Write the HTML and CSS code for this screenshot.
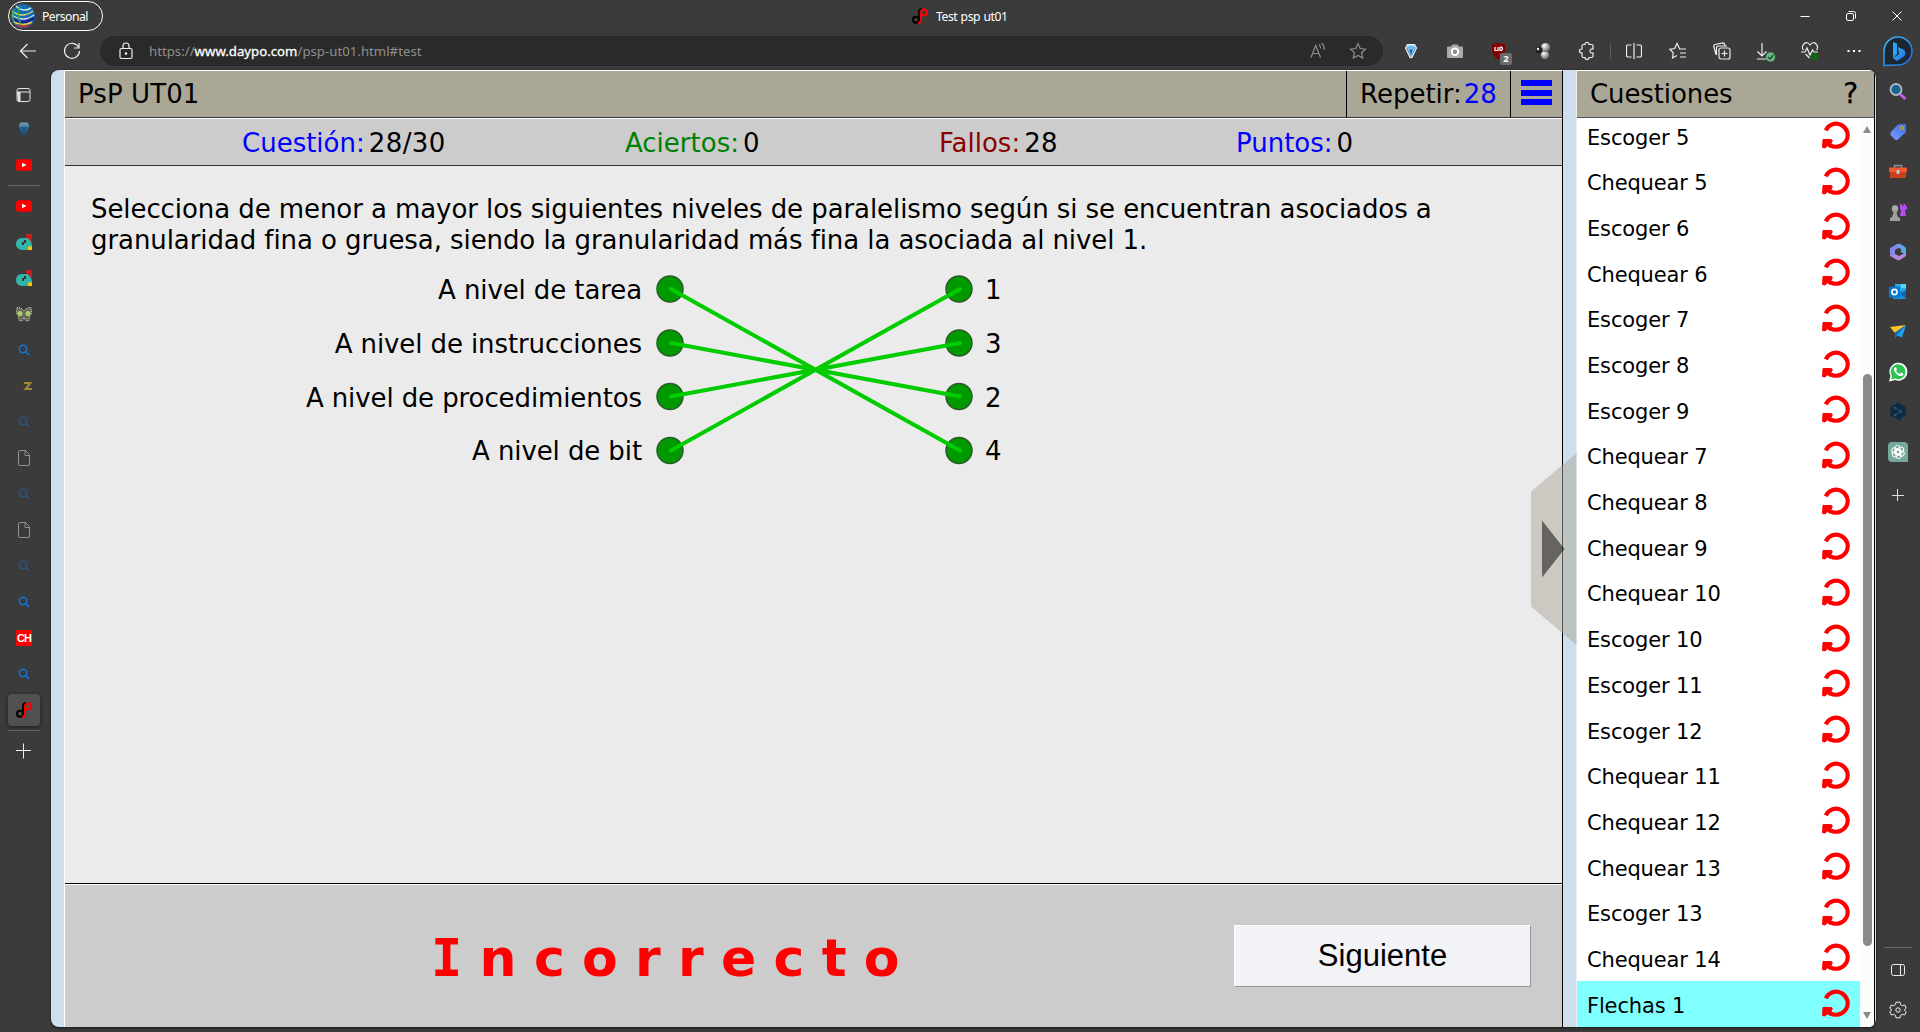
FILE: index.html
```html
<!DOCTYPE html>
<html lang="es">
<head>
<meta charset="utf-8">
<title>Test psp ut01</title>
<link rel="stylesheet" href="styles.css">
</head>
<body>
<svg class="defs" width="0" height="0">
  <defs>
    <linearGradient id="gBlue" x1="0" y1="0" x2="1" y2="1"><stop offset="0" stop-color="#35c1f1"/><stop offset="1" stop-color="#2764e7"/></linearGradient>
    <linearGradient id="gGem" x1="0" y1="0" x2="0" y2="1"><stop offset="0" stop-color="#b9e6fa"/><stop offset=".4" stop-color="#2095e2"/><stop offset="1" stop-color="#0359a8"/></linearGradient>
    <linearGradient id="gTag" x1="0" y1="1" x2="1" y2="0"><stop offset="0" stop-color="#7b9cff"/><stop offset="1" stop-color="#3f6fe0"/></linearGradient>
    <linearGradient id="gM1" x1="0" y1="0" x2="1" y2="0"><stop offset="0" stop-color="#8489e8"/><stop offset="1" stop-color="#3fb8f0"/></linearGradient>
    <radialGradient id="gBall" cx=".35" cy=".3" r=".8"><stop offset="0" stop-color="#fff"/><stop offset="1" stop-color="#555"/></radialGradient>
  </defs>
  <symbol id="redo" viewBox="0 0 28 28"><path d="M3.800 9.300A11.500 11.500 0 1 1 8 23.900" fill="none" stroke="#f00" stroke-width="4.200"/><path d="M1 18.400L9.200 18.600Q11 19 9.800 21L8.600 22.600L10.400 24.200L8 26.400L5.400 24.800L3 27L0.600 26.600Z" fill="#f00" stroke="#f00" stroke-linejoin="round"/></symbol>
  <symbol id="daypo" viewBox="0 0 16 16"><circle cx="4" cy="11.7" r="3" fill="none" stroke="#000" stroke-width="2"/><path d="M7 12V4.5Q7 1 10 1" fill="none" stroke="#000" stroke-width="2"/><circle cx="12" cy="4.6" r="3" fill="none" stroke="#f00" stroke-width="2"/><path d="M9 4.5V11.5Q9 15 6 15" fill="none" stroke="#f00" stroke-width="2"/></symbol>
  <symbol id="gem" viewBox="0 0 16 16"><path d="M4.500 1.500h7L13.500 5 9 14.500H7L2.500 5Z" fill="url(#gGem)"/><path d="M5.500 6h5L8 14.500Z" fill="#004a8f" opacity=".6"/></symbol>
  <symbol id="youtube" viewBox="0 0 16 16"><rect y="2.3" width="16" height="11.5" rx="3" fill="#f00"/><path d="M6 5.7v4.6l4.5-2.3Z" fill="#fff"/></symbol>
  <symbol id="cloud" viewBox="0 0 16 16"><path d="M10 0h6v12h-6Z" fill="#c71e1d"/><path d="M11 11h5v5h-5Z" fill="#ffc20e"/><path d="M6 4h5q4 1 5 8.500H12V16H6C2 15.500 0 13 0 10s2-6 6-6Z" fill="#31b5a8"/><path d="M6 8h2V6h2v3H8v2H6Z" fill="#3b3333"/></symbol>
  <symbol id="butterfly" viewBox="0 0 16 16"><path d="M1 1.500 5 2l3 3 3-3 4-.5.7 5.500-2 3-.7 4.500-3 .5-2-3.500-2 3.500-3-.5-.7-4.500-2-3Z" fill="#6c6a5c" stroke="#d8d8ca" stroke-dasharray="1 1"/><circle cx="4" cy="7.500" r="2.500" fill="#a9cf67"/><circle cx="12" cy="7.500" r="2.500" fill="#a9cf67"/></symbol>
  <symbol id="search" viewBox="0 0 16 16"><circle cx="7" cy="7" r="3.700" fill="none" stroke="#1574cf" stroke-width="1.500"/><path d="m9.700 9.700 3.500 3.300" stroke="#1574cf" stroke-width="1.700"/></symbol>
  <symbol id="file" viewBox="0 0 16 16"><path d="M3.500.5h6l4 4v9.500q0 1.500-1.500 1.500H3.500q-1 0-1-1V1.500q0-1 1-1Zm5.500 0v5h4.500" fill="none" stroke="#929292"/></symbol>
  <symbol id="plus" viewBox="0 0 16 16"><path d="M7.500.5v15M0 7.500h15" stroke="#eee"/></symbol>
</svg>

<div class="window">
  <header class="titlebar">
    <div class="profile">
      <svg width="24" height="24" viewBox="0 0 24 24"><circle cx="12" cy="12" r="12" fill="#176bb0"/><path d="M5 2q7 7 15 2" stroke="#b7ece0" stroke-width="1.500" fill="none"/><path d="M1 7q10 8 21 0" stroke="#ded66b" stroke-width="1.500" fill="none"/><path d="M1 11q11 8 22 0" stroke="#d8d4f7" stroke-width="1.500" fill="none"/><path d="M1 15q11 7 22-1" stroke="#17249e" stroke-width="3" fill="none"/><path d="M3 18q9 5 18 0" stroke="#e6cf3a" stroke-width="1.500" fill="none"/><path d="M6 21q7 3 12 0" stroke="#c92b38" stroke-width="2" fill="none"/><path d="M3 5q-3 6 0 13M9 2q-4 8 1 19" stroke="#32b24b" stroke-width="1.500" fill="none"/></svg>
      <span>Personal</span>
    </div>
    <div class="tab-title"><svg width="16" height="16"><use href="#daypo"/></svg><span>Test psp ut01</span></div>
    <div class="controls">
      <svg width="12" height="12" viewBox="0 0 12 12"><path d="M1.500 6.500h9"/></svg>
      <svg width="12" height="12" viewBox="0 0 12 12"><rect x="1.500" y="3.500" width="7" height="7" rx="1.500"/><path d="M3.500 1.500h5q2 0 2 2v5"/></svg>
      <svg width="12" height="12" viewBox="0 0 12 12"><path d="m1.500 1.500 9 9m0-9-9 9"/></svg>
    </div>
  </header>

  <nav class="toolbar">
    <div class="nav-btn"><svg width="18" height="18" viewBox="0 0 18 18"><path d="M17 9H1.500M8.500 2 1.500 9l7 7"/></svg></div>
    <div class="nav-btn"><svg width="18" height="18" viewBox="0 0 18 18"><path d="M15.500 5A7.500 7.500 0 1 0 16.500 9M16 1v5h-5"/></svg></div>
    <div class="address">
      <svg class="lock" width="14" height="18" viewBox="0 0 14 18"><rect x="1" y="6.500" width="12" height="10" rx="1.500"/><path d="M4 6.500V4q0-3 3-3t3 3v2.500"/><circle cx="7" cy="11.500" r=".7" fill="#fff"/></svg>
      <span class="url">https://<b>www.daypo.com</b>/psp-ut01.html#test</span>
      <svg class="dim" width="18" height="18" viewBox="0 0 18 18"><path d="m2 15.500 4.700-12L11.500 15.500M3.500 11.500h6.500M10 2.500q2 2 1.500 4M12.500 1q3.500 3 2.300 7"/></svg>
      <svg class="dim star" width="18" height="18" viewBox="0 0 18 18"><path d="m9 1.500 2.200 5 5.300.6-4 3.600 1.200 5.300L9 13.500 4.300 16l1.200-5.300-4-3.600 5.300-.6Z"/></svg>
    </div>
    <div class="tools">
      <span><svg width="16" height="16"><use href="#gem"/></svg></span>
      <span><svg width="16" height="16" viewBox="0 0 16 16"><path d="M1 3.500h3l1.500-2h5l1.500 2h3q1 0 1 1V14q0 1-1 1H1q-1 0-1-1V4.500q0-1 1-1Z" fill="#aaa" stroke="none"/><circle cx="8" cy="8.800" r="3.200" fill="#888" stroke="#fff" stroke-width="2"/></svg></span>
      <span class="shield"><svg width="16" height="18" viewBox="0 0 16 18"><path d="M1 2q4 0 6-1.500Q10 2 14 2v6q0 6-6.500 9.500Q1 14 1 8Z" fill="#800000" stroke="none"/><path d="M4 5v3.500h3V5m2 0v3.500h1.500q2-1.700 0-3.500H9" stroke="#fff"/></svg><i>2</i></span>
      <span><svg width="16" height="18" viewBox="0 0 16 18" stroke="none"><g stroke="none"><circle cx="10" cy="13" r="4.200" fill="url(#gBall)"/><circle cx="10.500" cy="5.500" r="4.500" fill="url(#gBall)"/><circle cx="4" cy="8" r="3.500" fill="#222"/><circle cx="3" cy="7" r="1.200" fill="#eee"/></g></svg></span>
      <span><svg width="18" height="18" viewBox="0 0 18 18"><path d="M4 4q0-1.500 1.500-1.500H7q0-2 2-2t2 2h2.500Q15 2.500 15 4v3q-3-.3-3 2t3 2v3q0 1.500-1.500 1.500H11q0 2-2 2t-2-2H5.500Q4 15.500 4 14v-3q-2.500 0-2.500-2T4 7Z"/></svg></span>
      <em></em>
      <span><svg width="16" height="18" viewBox="0 0 16 18"><path d="M8 1v16M5.500 3H2q-1.500 0-1.500 1.500v9Q.5 15 2 15h3.500m5-12H14q1.500 0 1.500 1.500v9q0 1.500-1.500 1.500h-3.500"/></svg></span>
      <span><svg width="18" height="18" viewBox="0 0 18 18"><path d="M10.500 6.500 8 1.500 5.700 6.500.8 7.300l3.500 3.500L3.500 16 8 13.500M10 7h7m-6 4h6m-6 4h6"/></svg></span>
      <span><svg width="18" height="18" viewBox="0 0 18 18"><rect x="6" y="6" width="11" height="11" rx="2"/><path d="M11.500 8.500v6m-3-3h6M3 12.500.8 4.500Q.5 3 2 2.500L10 .8q1.500 0 2 3M3.500 13V6q0-2 2-2H14"/></svg></span>
      <span><svg width="22" height="22" viewBox="0 0 22 22"><path d="M7 3v13M2.500 11.500 7 16l4.500-4.500M2 19h9"/><circle cx="15.500" cy="17" r="4.700" fill="#6bb585" stroke="none"/><path d="m13 17 2 2 3.500-4" stroke="#174d2a"/></svg></span>
      <span><svg width="20" height="20" viewBox="0 0 20 20"><path d="M3.500 9Q1 6 4 3t6 1q3-4 6-1t.5 6M5.500 13l4 4m-8.500-6h4l2-4 3 7 2.500-5 1.500 2h4"/><circle cx="14.500" cy="15.500" r="3.500" fill="#0b6a0b" stroke="none"/></svg></span>
      <span><svg width="16" height="4" viewBox="0 0 16 4"><path d="M1.500 1h2v2h-2Zm5.500 0h2v2H7Zm5.500 0h2v2h-2Z" fill="#fff" stroke="none"/></svg></span>
    </div>
    <svg class="bing" width="32" height="32" viewBox="0 0 32 32"><path d="M2 30.500V16A14 14 0 1 1 16 30Z" fill="#1d2633" stroke="url(#gBlue)" stroke-width="1.500"/><path d="m11 7 4 1.500V19l-4 4Z" fill="#29a8ef"/><path d="m16 12 6 3q3 3 0 6.500L15 26l-4-3 6-3.700Z" fill="url(#gBlue)"/></svg>
  </nav>

  <div class="workspace">
    <aside class="tabs">
      <div class="tab first"><svg width="16" height="16" viewBox="0 0 16 16"><rect x="1" y="1.500" width="13" height="13" rx="2" fill="none" stroke="#e3e3e3"/><path d="M1 5h13" stroke="#e3e3e3"/><path d="M1 5h3.500v9.500H2Z" fill="#e3e3e3"/></svg></div>
      <div class="tab faded"><svg width="16" height="16"><use href="#gem"/></svg></div>
      <div class="tab"><svg width="16" height="16"><use href="#youtube"/></svg></div>
      <div class="rule"></div>
      <div class="tab"><svg width="16" height="16"><use href="#youtube"/></svg></div>
      <div class="tab"><svg width="16" height="16"><use href="#cloud"/></svg></div>
      <div class="tab"><svg width="16" height="16"><use href="#cloud"/></svg></div>
      <div class="tab"><svg width="16" height="16"><use href="#butterfly"/></svg></div>
      <div class="tab"><svg width="16" height="16"><use href="#search"/></svg></div>
      <div class="tab"><svg width="16" height="16" viewBox="0 0 16 16"><path d="M1 12V5l3 4 3-4v7" fill="none" stroke="#484236"/><path d="M8 5h6.500L9.500 11H16" fill="none" stroke="#a58a35" stroke-width="2"/></svg></div>
      <div class="tab sleeping"><svg width="16" height="16"><use href="#search"/></svg></div>
      <div class="tab"><svg width="16" height="16"><use href="#file"/></svg></div>
      <div class="tab sleeping"><svg width="16" height="16"><use href="#search"/></svg></div>
      <div class="tab"><svg width="16" height="16"><use href="#file"/></svg></div>
      <div class="tab sleeping"><svg width="16" height="16"><use href="#search"/></svg></div>
      <div class="tab"><svg width="16" height="16"><use href="#search"/></svg></div>
      <div class="tab"><span class="ch">CH</span></div>
      <div class="tab"><svg width="16" height="16"><use href="#search"/></svg></div>
      <div class="tab"><div class="active"><svg width="16" height="16"><use href="#daypo"/></svg></div></div>
      <div class="rule"></div>
      <div class="tab"><svg width="16" height="16"><use href="#plus"/></svg></div>
    </aside>

    <main class="page">
      <section class="quiz">
        <div class="quiz-head">
          <h1>PsP UT01</h1>
          <div class="repeat">Repetir:<span>28</span></div>
          <div class="menu"><i></i><i></i><i></i></div>
        </div>
        <div class="stats">
          <div class="blue">Cuestión:<span>28/30</span></div>
          <div class="green">Aciertos:<span>0</span></div>
          <div class="maroon">Fallos:<span>28</span></div>
          <div class="blue">Puntos:<span>0</span></div>
        </div>
        <div class="question">
          <p>Selecciona de menor a mayor los siguientes niveles de paralelismo según si se encuentran asociados a<br>granularidad fina o gruesa, siendo la granularidad más fina la asociada al nivel 1.</p>
          <div class="match">
            <div class="labels"><span>A nivel de tarea</span><span>A nivel de instrucciones</span><span>A nivel de procedimientos</span><span>A nivel de bit</span></div>
            <svg width="320" height="216" viewBox="0 0 320 216">
              <g fill="#090" stroke="#2b5a2b" stroke-width="1.500">
                <circle cx="15" cy="27" r="13"/><circle cx="15" cy="81" r="13"/><circle cx="15" cy="134.500" r="13"/><circle cx="15" cy="188.500" r="13"/>
                <circle cx="304" cy="27" r="13"/><circle cx="304" cy="81" r="13"/><circle cx="304" cy="134.500" r="13"/><circle cx="304" cy="188.500" r="13"/>
              </g>
              <path d="M16 27 305 188.500M16 81 305 134.500M16 134.500 305 81M16 188.500 305 27" stroke="#0c0" stroke-width="4" stroke-linecap="round"/>
            </svg>
            <div class="values"><span>1</span><span>3</span><span>2</span><span>4</span></div>
          </div>
        </div>
        <div class="result">
          <strong><span>I</span>ncorrecto</strong>
          <div class="next">Siguiente</div>
        </div>
      </section>
      <section class="list-panel">
        <div class="list-head"><span>Cuestiones</span><span class="help">?</span></div>
        <div class="list-body">
          <div class="rows">
            <div class="row">Escoger 5<svg><use href="#redo"/></svg></div>
            <div class="row">Chequear 5<svg><use href="#redo"/></svg></div>
            <div class="row">Escoger 6<svg><use href="#redo"/></svg></div>
            <div class="row">Chequear 6<svg><use href="#redo"/></svg></div>
            <div class="row">Escoger 7<svg><use href="#redo"/></svg></div>
            <div class="row">Escoger 8<svg><use href="#redo"/></svg></div>
            <div class="row">Escoger 9<svg><use href="#redo"/></svg></div>
            <div class="row">Chequear 7<svg><use href="#redo"/></svg></div>
            <div class="row">Chequear 8<svg><use href="#redo"/></svg></div>
            <div class="row">Chequear 9<svg><use href="#redo"/></svg></div>
            <div class="row">Chequear 10<svg><use href="#redo"/></svg></div>
            <div class="row">Escoger 10<svg><use href="#redo"/></svg></div>
            <div class="row">Escoger 11<svg><use href="#redo"/></svg></div>
            <div class="row">Escoger 12<svg><use href="#redo"/></svg></div>
            <div class="row">Chequear 11<svg><use href="#redo"/></svg></div>
            <div class="row">Chequear 12<svg><use href="#redo"/></svg></div>
            <div class="row">Chequear 13<svg><use href="#redo"/></svg></div>
            <div class="row">Escoger 13<svg><use href="#redo"/></svg></div>
            <div class="row">Chequear 14<svg><use href="#redo"/></svg></div>
            <div class="row current">Flechas 1<svg><use href="#redo"/></svg></div>
          </div>
          <div class="scrollbar"><b class="up"></b><div class="thumb"></div><b class="down"></b></div>
        </div>
      </section>
      <svg class="handle" width="46" height="192" viewBox="0 0 46 192"><path d="M0 38.500 45.500 0v192L0 153.500Z" fill="#aba798" fill-opacity=".5"/><path d="M11 67.500 33.500 96 11 124.500Z" fill="#000" fill-opacity=".5"/></svg>
    </main>

    <aside class="apps">
      <div><svg width="18" height="18" viewBox="0 0 18 18"><path d="m11 11 5.500 5" stroke="#c45cf5" stroke-width="3"/><circle cx="7" cy="6.500" r="5.500" fill="#18658f" stroke="#aebac2" stroke-width="1.800"/></svg></div>
      <div><svg width="18" height="18" viewBox="0 0 18 18"><path d="M9 1.500 15.500.8q1.500 0 1.500 1.500V9L9 16.500q-1.500 1-3 0L2 12.500q-1.500-1.500 0-3.500Z" fill="url(#gTag)"/><circle cx="13" cy="5" r="1.400" fill="#333" stroke="#f7d417"/></svg></div>
      <div><svg width="18" height="18" viewBox="0 0 18 18"><path d="M5.500 5V2.500h7V5" fill="none" stroke="#8d9499" stroke-width="1.500"/><rect y="4.500" width="18" height="5" rx="1" fill="#f15b31"/><path d="M1 9h16v6H1Z" fill="#c9401d"/><rect x="7.500" y="7" width="3" height="4" rx="1" fill="#ccc"/></svg></div>
      <div><svg width="20" height="20" viewBox="0 0 20 20"><path d="M12 2h2v2h1.500V2h2v2H19V2v5l-2 1 1 6h-6l1-6-1-1Z" fill="#b44df0"/><circle cx="7" cy="6.500" r="3.200" fill="#a9a9a9"/><path d="M4 9.500h6L8.500 11l1.500 4 2 1v3H2v-3l2-1 1.500-4Z" fill="#a0a0a0"/></svg></div>
      <div><svg width="18" height="18" viewBox="0 0 18 18"><path d="M8 1 2 4.500Q1 5 1 6v7l5-2V7l5-3Z" fill="#8388e6"/><path d="M8 1 11 .8 16 4q1 .7 1 2v6l-5-3V6L8 4Z" fill="url(#gM1)"/><path d="m1 12 5-1 4 2 7-3.500V13l-6 4q-1.500.7-3 0l-6-3.500Q1 13 1 12Z" fill="#b18ae0"/></svg></div>
      <div><svg width="18" height="18" viewBox="0 0 18 18"><path d="M6 1h11v8H6Z" fill="#29a8ea"/><path d="M12 1h5v4h-5Z" fill="#50d9ff"/><path d="M4 8h13v8H4Z" fill="#1490df"/><path d="m17 7-6 4 6 5Z" fill="#1266b5"/><rect y="3.500" width="11" height="11" rx="1" fill="#0078d4"/><circle cx="5.500" cy="9" r="2.600" fill="none" stroke="#fff" stroke-width="1.600"/></svg></div>
      <div><svg width="18" height="18" viewBox="0 0 18 18"><path d="m1 4 16-2L6 10Z" fill="#ffc425"/><path d="M17 2 6 9.500v6l2-3 5 2Z" fill="#259ee9"/><path d="m6 9.500 11-7.500-9 10-2 3.500Z" fill="#176bb7"/></svg></div>
      <div><svg width="20" height="20" viewBox="0 0 20 20"><path d="M1 19.500 2.500 14A9 9 0 1 1 7 18Z" fill="#fff"/><path d="M3 17.500 4 14a7.400 7.400 0 1 1 3 2.500Z" fill="#2fc351"/><path d="M6 6Q7 4.500 8 5l1 2.500-1 1q1 2.500 4 3.500l1-1.500 2.500 1.200Q15.500 14 12.500 14q-3 0-5.500-4Q5.500 8 6 6Z" fill="#fff"/></svg></div>
      <div><svg width="16" height="20" viewBox="0 0 16 20"><path d="M8 .5 15.500 5v8.500L11 16v3.500L8 17.500.5 13.500V5Z" fill="#0d2b49"/><path d="m5 6 6 3.500L5 13" fill="none" stroke="#3d5268"/><circle cx="5" cy="6" r="1.300" fill="#3d5268"/><circle cx="11" cy="9.500" r="1.300" fill="#3d5268"/><circle cx="5" cy="13" r="1.300" fill="#3d5268"/></svg></div>
      <div><svg width="20" height="20" viewBox="0 0 20 20"><path d="M4 0h12q4 0 4 4v16H4q-4 0-4-4V4q0-4 4-4Z" fill="#75a99c"/><g fill="none" stroke="#fff"><rect x="7" y="3.500" width="5" height="9" rx="2.500"/><rect x="7" y="3.500" width="5" height="9" rx="2.500" transform="rotate(60 10 10)"/><rect x="7" y="3.500" width="5" height="9" rx="2.500" transform="rotate(120 10 10)"/><rect x="7" y="3.500" width="5" height="9" rx="2.500" transform="rotate(180 10 10)"/><rect x="7" y="3.500" width="5" height="9" rx="2.500" transform="rotate(240 10 10)"/><rect x="7" y="3.500" width="5" height="9" rx="2.500" transform="rotate(300 10 10)"/></g></svg></div>
      <div class="add-app"><svg width="12" height="12" viewBox="0 0 12 12"><path d="M5.500 0v12M0 6.500h12" stroke="#ddd"/></svg></div>
      <p></p>
      <div><svg width="16" height="16" viewBox="0 0 16 16"><rect x="1.500" y="2.500" width="13" height="11" rx="2" fill="none" stroke="#eee"/><path d="M10.500 2.500v11" stroke="#eee"/></svg></div>
      <div><svg width="18" height="18" viewBox="0 0 18 18"><path d="m7 1.200-.6 2.500-1.700 1L2.300 4 .8 7.200l2 1.800-2 1.800L2.300 14l2.400-.7 1.700 1 .6 2.500h4l.6-2.500 1.700-1 2.400.7 1.500-3.200-2-1.800 2-1.800L15.700 4l-2.400.7-1.700-1-.6-2.500Z" fill="none" stroke="#eee"/><circle cx="9" cy="9" r="2.200" fill="none" stroke="#eee"/></svg></div>
    </aside>
  </div>
</div>
</body>
</html>
```
FILE: styles.css
```css
* { box-sizing: border-box; }
body { margin: 0; background: #3b3b3b; font-family: "DejaVu Sans", sans-serif; color: #000; }
svg { display: block; flex: none; }
.defs { position: absolute; }
.window { width: 1920px; height: 1032px; display: flex; flex-direction: column; overflow: hidden; }

/* browser chrome */
.titlebar { height: 34px; display: grid; grid-template-columns: 912px 1fr auto; font: 12.200px "Noto Sans", sans-serif; color: #fff; }
.profile { width: 95px; height: 30px; margin: 1px 0 0 8px; padding-left: 2px; border: 1px solid #fff; border-radius: 15px; display: flex; align-items: center; gap: 7px; }
.profile span { letter-spacing: -.5px; }
.tab-title { display: flex; gap: 8px; align-items: center; height: 32px; letter-spacing: -.42px; word-spacing: .5px; }
.controls { display: flex; gap: 34px; padding: 10px 17px 0 0; }
.controls svg { fill: none; stroke: #fff; }
.toolbar { height: 36px; display: flex; align-items: flex-start; padding: 2px 0 0 6px; }
.toolbar svg { fill: none; stroke: #eee; stroke-width: 1.200; }
.nav-btn { width: 44px; height: 30px; display: flex; align-items: center; justify-content: center; }
.address { width: 1283px; height: 30px; margin-left: 6px; padding: 0 16px 0 19px; border-radius: 15px; background: #2a2a2a; display: flex; align-items: center; }
.url { flex: 1; margin-left: 16px; color: #8f8f8f; font: 13.200px "Noto Sans", sans-serif; letter-spacing: .02px; }
.url b { color: #fff; font-weight: 400; -webkit-text-stroke: .3px #fff; }
.toolbar .dim { stroke: #8d8d8d; }
.star { margin-left: 22px; }
.tools { flex: none; display: flex; width: 494px; height: 30px; margin-left: 6px; }
.tools span { flex: none; width: 44px; display: flex; align-items: center; justify-content: center; }
.tools em { flex: none; width: 1px; height: 16px; margin: 7px 1px 0 1px; background: #5c5c5c; }
.shield { position: relative; }
.shield i { position: absolute; left: 23px; top: 17px; width: 12px; height: 12px; border-radius: 2px; background: #6a6a6a; color: #fff; font: bold 9.500px/12px "Noto Sans", sans-serif; text-align: center; }
.toolbar .bing { margin: -1px 0 0 -1px; stroke: none; }

/* vertical tab strip */
.workspace { height: 962px; display: flex; }
.tabs { width: 51px; padding-top: 7px; }
.tab { width: 48px; height: 36px; display: flex; align-items: center; justify-content: center; }
.first { height: 36px; margin-bottom: -2px; }
.faded { opacity: .6; }
.sleeping { opacity: .45; }
.rule { width: 32px; height: 1px; margin: 2px 8px; background: #666; }
.active { width: 32px; height: 32px; border-radius: 4px; background: #505050; box-shadow: 0 1px 4px #1c1c1c; display: flex; align-items: center; justify-content: center; }
.ch { width: 16px; height: 16px; background: #f00; color: #fff; font: bold 11px/16px "Liberation Sans", sans-serif; letter-spacing: -1px; text-align: center; }

/* page */
.page { position: relative; width: 1825px; height: 957px; background: #cfdeee; border-radius: 8px; overflow: hidden; display: flex; box-shadow: 0 1px 3px #181818; }
.quiz { width: 1499px; margin-left: 13px; border-left: 1px solid #fff; border-right: 1px solid #000; border-top: 1px solid #fff; display: flex; flex-direction: column; font-size: 26px; }
.quiz-head { height: 47px; background: #aba796; border-bottom: 1px solid #333; display: flex; line-height: 46px; }
h1 { flex: 1; margin: 0 0 0 13px; font-size: 26px; font-weight: 400; letter-spacing: .1px; }
.repeat { width: 164px; padding-left: 13px; border-left: 1px solid #000; white-space: nowrap; }
.repeat span { color: #00f; margin-left: 2px; }
.menu { width: 52px; border-left: 1px solid #000; padding: 9px 0 0 10px; display: flex; flex-direction: column; gap: 3.500px; }
.menu i { width: 31px; height: 6px; background: #00f; }
.stats { height: 48px; border-top: 1px solid #fff; border-bottom: 1px solid #333; background: #ccc; display: grid; grid-template-columns: 383px 314px 297px 1fr; padding-left: 177px; line-height: 49px; }
.stats span { color: #000; margin-left: 4px; letter-spacing: .4px; }
.blue { color: #00f; }
.green { color: green; }
.maroon { color: #8b0000; }
.question { flex: 1; background: #ebebeb; padding: 28px 0 0 26px; }
.question p { margin: 0; line-height: 31px; letter-spacing: -.08px; white-space: nowrap; }
.match { display: flex; margin-top: 6px; }
.labels { width: 551px; text-align: right; margin-right: 13px; letter-spacing: -.1px; }
.labels span, .values span { display: block; height: 53.800px; line-height: 57px; }
.match svg { margin-right: 10px; }
.result { height: 144px; border-top: 1px solid #000; background: #ccc; box-shadow: inset 0 1px #fff; display: flex; align-items: flex-start; padding: 41px 31px 0 366px; }
.result strong { flex: 1; color: #f00; font-size: 52px; line-height: 66px; letter-spacing: 17.300px; }
.result strong span { font-family: "DejaVu Sans Mono", monospace; }
.next { width: 297px; height: 62px; background: #f2f3f7; border: 1px solid #999; border-top-color: #fff; border-left-color: #fff; font: 31px/60px "Liberation Sans", Arial, sans-serif; text-align: center; }

/* question list */
.list-panel { width: 299px; margin-left: 13px; border-top: 1px solid #fff; border-left: 1px solid #eee; display: flex; flex-direction: column; border-right: 1px solid #000; }
.list-head { height: 47px; background: #aba796; border-bottom: 1px solid #555; display: flex; justify-content: space-between; padding: 0 16px 0 13px; font-size: 26px; line-height: 46px; letter-spacing: -.1px; }
.help { font-size: 28px; -webkit-text-stroke: .3px #000; }
.list-body { height: 909px; display: flex; background: #fff; }
.rows { width: 283px; overflow: hidden; display: flex; flex-direction: column; justify-content: flex-end; }
.row { flex: none; height: 45.700px; display: flex; justify-content: space-between; align-items: center; padding: 3px 10px 0 10px; font-size: 21px; letter-spacing: -.15px; }
.row svg { width: 28px; height: 28px; margin-top: -5px; }
.current { background: #80ffff; }
.scrollbar { flex: 1; background: #fcfcfc; display: flex; flex-direction: column; align-items: center; padding: 8px 0; }
.thumb { flex: none; width: 9px; height: 572px; margin-top: 241px; border-radius: 5px; background: #8b8b8b; }
.up { border: 4px solid transparent; border-top: 0; border-bottom: 7px solid #8b8b8b; }
.down { margin-top: auto; border: 4px solid transparent; border-bottom: 0; border-top: 7px solid #8b8b8b; }
.handle { position: absolute; left: 1480px; top: 383px; }

/* app sidebar */
.apps { flex: 1; display: flex; flex-direction: column; padding-top: 2px; }
.apps div { flex: none; height: 40px; display: flex; align-items: center; justify-content: center; }
.apps .add-app { height: 46px; }
.apps p { width: 28px; height: 1px; margin: auto 0 2px 8px; background: #666; }
.apps div:last-child { margin-bottom: 2px; }
```
